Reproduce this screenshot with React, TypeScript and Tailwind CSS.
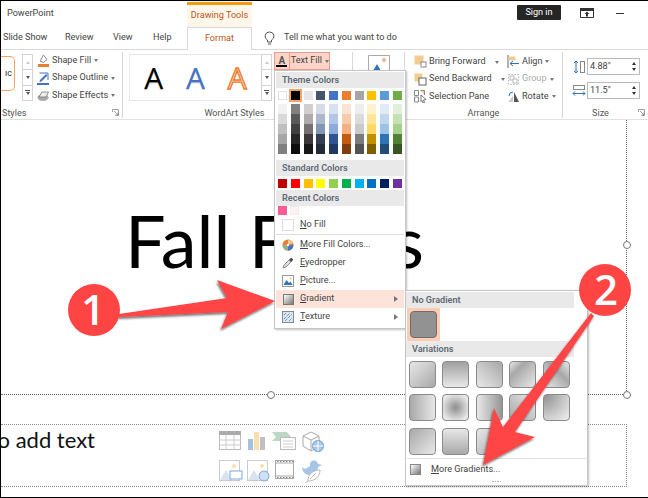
import React from "react";

const theme = ["bg-white", "bg-black", "bg-[#e7e6e6]", "bg-[#44546a]", "bg-[#4472c4]", "bg-[#ed7d31]", "bg-[#a5a5a5]", "bg-[#ffc000]", "bg-[#5b9bd5]", "bg-[#70ad47]"];
const shades = [
  ["bg-[#f2f2f2]", "bg-[#d9d9d9]", "bg-[#bfbfbf]", "bg-[#a6a6a6]", "bg-[#808080]"],
  ["bg-[#808080]", "bg-[#595959]", "bg-[#404040]", "bg-[#262626]", "bg-[#0d0d0d]"],
  ["bg-[#d0cece]", "bg-[#afabab]", "bg-[#767171]", "bg-[#3b3838]", "bg-[#181717]"],
  ["bg-[#d6dce5]", "bg-[#adb9ca]", "bg-[#8497b0]", "bg-[#333f50]", "bg-[#222a35]"],
  ["bg-[#d9e2f3]", "bg-[#b4c6e7]", "bg-[#8eaadb]", "bg-[#2f5496]", "bg-[#1f3864]"],
  ["bg-[#fbe4d5]", "bg-[#f7cbac]", "bg-[#f4b083]", "bg-[#c55a11]", "bg-[#833c0b]"],
  ["bg-[#ededed]", "bg-[#dbdbdb]", "bg-[#c9c9c9]", "bg-[#7b7b7b]", "bg-[#525252]"],
  ["bg-[#fff2cc]", "bg-[#ffe599]", "bg-[#ffd966]", "bg-[#bf9000]", "bg-[#7f6000]"],
  ["bg-[#deeaf6]", "bg-[#bdd7ee]", "bg-[#9cc3e5]", "bg-[#2e75b5]", "bg-[#1f4e79]"],
  ["bg-[#e2efd9]", "bg-[#c5e0b3]", "bg-[#a8d08d]", "bg-[#538135]", "bg-[#375623]"],
];
const standard = ["bg-[#c00000]", "bg-[#ff0000]", "bg-[#ffc000]", "bg-[#ffff00]", "bg-[#92d050]", "bg-[#00b050]", "bg-[#00b0f0]", "bg-[#0070c0]", "bg-[#002060]", "bg-[#7030a0]"];
const variations = [
  "bg-[linear-gradient(135deg,#e8e8e8,#a8a8a8)]",
  "bg-[linear-gradient(180deg,#a0a0a0,#e8e8e8)]",
  "bg-[linear-gradient(225deg,#a8a8a8,#e8e8e8)]",
  "bg-[linear-gradient(315deg,#e8e8e8,#a8a8a8_70%,#e8e8e8)]",
  "bg-[linear-gradient(45deg,#e8e8e8,#a8a8a8_60%,#e8e8e8)]",
  "bg-[linear-gradient(90deg,#a8a8a8,#e8e8e8)]",
  "bg-[radial-gradient(circle,#8e8e8e,#e8e8e8_80%)]",
  "bg-[linear-gradient(90deg,#e8e8e8,#969696)]",
  "bg-[linear-gradient(45deg,#a8a8a8,#e8e8e8)]",
  "bg-[radial-gradient(circle_at_top_left,#8e8e8e,#e8e8e8_90%)]",
  "bg-[linear-gradient(135deg,#a8a8a8,#e8e8e8)]",
  "bg-[linear-gradient(180deg,#e8e8e8,#a8a8a8)]",
  "bg-[linear-gradient(315deg,#a8a8a8,#e8e8e8)]",
];

const Caret = () => <span className="inline-block ml-[3px] border-x-[2.5px] border-t-[3px] border-x-transparent border-t-[#777]" />;

function ScrollCol() {
  return (
    <div className="flex flex-col w-[11px] h-[47px] border border-[#d4d4d4] bg-white shrink-0">
      <div className="flex-1 flex items-center justify-center border-b border-[#d4d4d4]"><span className="border-x-[2.5px] border-b-[3px] border-x-transparent border-b-[#ccc]" /></div>
      <div className="flex-1 flex items-center justify-center border-b border-[#d4d4d4]"><span className="border-x-[2.5px] border-t-[3px] border-x-transparent border-t-[#555]" /></div>
      <div className="flex-1 flex flex-col items-center justify-center gap-[1px]"><span className="w-[5px] h-px bg-[#555]" /><span className="border-x-[2.5px] border-t-[3px] border-x-transparent border-t-[#555]" /></div>
    </div>
  );
}

function Launcher() {
  return (
    <svg width="7" height="7" viewBox="0 0 7 7" className="absolute right-[3px] bottom-[2px]">
      <path d="M0.5 3V0.5H6.5V6.5H3.5M2 2L6 6M6 3.5V6H3.5" fill="none" stroke="#888" strokeWidth="0.8" />
    </svg>
  );
}

function Group({ label, className, labelClass, children, launcher }: { label: string; className: string; labelClass: string; children: React.ReactNode; launcher?: boolean }) {
  return (
    <div className={`relative flex flex-col border-r border-[#d8d8d8] h-[66px] mt-[2px] ${className}`}>
      <div className="flex-1 flex min-h-0">{children}</div>
      <div className={`h-[14px] leading-[18px] text-[#555] ${labelClass}`}>{label}</div>
      {launcher && <Launcher />}
    </div>
  );
}

function SmallBtn({ icon, children, muted }: { icon: React.ReactNode; children: React.ReactNode; muted?: boolean }) {
  return (
    <div className={`flex items-center h-[17.5px] whitespace-nowrap ${muted ? "text-[#aaa]" : "text-[#444]"}`}>
      <span className="w-[15px] h-[14px] mr-[1px] flex items-center justify-center shrink-0">{icon}</span>
      {children}
    </div>
  );
}

function Spinner() {
  return (
    <div className="flex flex-col items-center gap-[3px] mr-[3px]">
      <span className="border-x-[2.5px] border-b-[3px] border-x-transparent border-b-[#333]" />
      <span className="border-x-[2.5px] border-t-[3px] border-x-transparent border-t-[#333]" />
    </div>
  );
}

function SizeInput({ value }: { value: string }) {
  return (
    <div className="w-[53px] h-[17px] border border-[#bbb] flex items-center justify-between pl-[2px] text-[#444] bg-white">
      {value}
      <Spinner />
    </div>
  );
}

function Header({ children }: { children: React.ReactNode }) {
  return <div className="h-[16px] bg-[#e9e9e9] pl-[6px] font-semibold text-[#5f6a75] leading-[16px]">{children}</div>;
}

function Item({ icon, u, rest, arrow, active }: { icon: React.ReactNode; u: string; rest: string; arrow?: boolean; active?: boolean }) {
  return (
    <div className={`relative h-[18px] flex items-center text-[#444] ${active ? "bg-[#fde3da]" : ""}`}>
      <span className="w-[24px] flex justify-center shrink-0">{icon}</span>
      <span><span className="underline">{u}</span>{rest}</span>
      {arrow && <span className="absolute right-[6px] border-y-[3px] border-l-[4px] border-y-transparent border-l-[#777]" />}
    </div>
  );
}

function TextFillMenu() {
  return (
    <div className="absolute left-[273px] top-[69px] w-[132px] h-[259px] bg-white border border-[#c6c6c6] shadow-[1px_1px_2px_rgba(0,0,0,0.25)] p-px flex flex-col">
      <Header>Theme Colors</Header>
      <div className="grid grid-cols-10 gap-x-[3.8px] px-[2px] pt-[3px]">
        {theme.map((c, i) => (
          <span key={i} className={`h-[9px] ${c} ${i === 1 ? "outline-2 outline-[#f4a26b]" : i === 0 ? "border border-[#e2e2e2]" : ""}`} />
        ))}
      </div>
      <div className="grid grid-cols-10 gap-x-[3.8px] px-[2px] pt-[4px]">
        {shades.map((col, i) => (
          <div key={i} className="flex flex-col">
            {col.map((c) => <span key={c} className={`h-[10px] ${c}`} />)}
          </div>
        ))}
      </div>
      <div className="mt-[6px]"><Header>Standard Colors</Header></div>
      <div className="grid grid-cols-10 gap-x-[3.8px] px-[2px] pt-[3px] pb-[2px]">
        {standard.map((c) => <span key={c} className={`h-[9px] ${c}`} />)}
      </div>
      <Header>Recent Colors</Header>
      <div className="flex gap-[3px] px-[2px]">
        <span className="w-[9px] h-[9px] bg-[#fb5c95]" />
        <span className="w-[9px] h-[9px] bg-[#fdf3f6] border border-[#eee]" />
      </div>
      <div className="h-[18px] mt-px flex items-center text-[#444]">
        <span className="w-[24px] flex justify-center"><span className="w-[12px] h-[12px] border border-[#ddd]" /></span>
        <span><span className="underline">N</span>o Fill</span>
      </div>
      <div className="h-px bg-[#dcdcdc]" />
      <div className="pt-[1px]">
        <Item u="M" rest="ore Fill Colors..." icon={
          <svg width="12" height="12" viewBox="0 0 12 12"><circle cx="6" cy="6" r="5.5" fill="#ed7d31" /><path d="M6 6L11.5 6A5.5 5.5 0 0 1 6 11.5Z" fill="#4472c4" /><path d="M6 6L6 11.5A5.5 5.5 0 0 1 0.5 6Z" fill="#8fb08a" /><path d="M6 6L6 0.5A5.5 5.5 0 0 1 11 4Z" fill="#f3c98b" /><circle cx="6" cy="6" r="1.3" fill="#fff" /></svg>
        } />
        <Item u="E" rest="yedropper" icon={
          <svg width="12" height="12" viewBox="0 0 12 12"><path d="M1 11L2 8L7 3L9 5L4 10Z" fill="#ddd" stroke="#666" strokeWidth="0.7" /><path d="M7 2.5L9.5 0.8L11.2 2.5L9.5 5Z" fill="#444" /></svg>
        } />
        <Item u="P" rest="icture..." icon={
          <svg width="12" height="12" viewBox="0 0 12 12"><rect x="0.5" y="0.5" width="11" height="11" fill="#fff" stroke="#999" /><path d="M1.5 10L4.5 5L7 8L8.5 6.5L10.5 10Z" fill="#2e75b5" /><circle cx="8.5" cy="3.5" r="1" fill="#f4b183" /></svg>
        } />
        <Item active arrow u="G" rest="radient" icon={<span className="w-[11px] h-[11px] border border-[#777] bg-[linear-gradient(135deg,#fff,#777)]" />} />
        <Item arrow u="T" rest="exture" icon={
          <svg width="12" height="12" viewBox="0 0 12 12"><rect x="0.5" y="0.5" width="11" height="11" fill="#dce6f2" stroke="#888" /><path d="M2 4L4 2M2 8L8 2M3 10L10 3M7 10L10 7" stroke="#2e75b5" strokeDasharray="1 1" fill="none" /></svg>
        } />
      </div>
    </div>
  );
}

function GradientMenu() {
  return (
    <div className="absolute left-[404px] top-[289px] w-[183px] h-[196px] bg-white border border-[#c6c6c6] shadow-[1px_1px_2px_rgba(0,0,0,0.25)] pt-px flex flex-col">
      <div className="w-[168px]"><Header>No Gradient</Header></div>
      <div className="w-[33px] h-[33px] ml-px bg-[#fbcdb4] flex items-center justify-center">
        <span className="w-[27px] h-[27px] rounded-[4px] bg-[#929292] border border-[#6e6e6e]" />
      </div>
      <div className="w-[168px]"><Header>Variations</Header></div>
      <div className="grid grid-cols-[repeat(5,27px)] gap-x-[6.4px] gap-y-[6.4px] pl-[3px] pt-[4px]">
        {variations.map((c, i) => <span key={i} className={`h-[27px] rounded-[4px] border border-[#8a8a8a] ${c}`} />)}
      </div>
      <div className="h-px bg-[#e0e0e0] mx-px mt-[3px]" />
      <div className="h-[20px] flex items-center text-[#444] mt-px">
        <span className="w-[25px] pl-[4px] flex"><span className="w-[11px] h-[11px] border border-[#888] bg-[linear-gradient(135deg,#fff,#777)]" /></span>
        <span><span className="underline">M</span>ore Gradients...</span>
      </div>
      <div className="flex justify-center gap-[1px] pt-[1px]">
        {[0, 1, 2, 3].map((i) => <span key={i} className="w-[1.5px] h-[1.5px] bg-[#bbb]" />)}
      </div>
    </div>
  );
}

function Annotations() {
  return (
    <svg width="648" height="498" viewBox="0 0 648 498" className="absolute left-0 top-0 pointer-events-none">
      <defs>
        <filter id="ds" x="-20%" y="-20%" width="140%" height="140%">
          <feDropShadow dx="-1" dy="2" stdDeviation="1" floodColor="#000" floodOpacity="0.55" />
        </filter>
      </defs>
      <g fill="#ff4444" filter="url(#ds)">
        <path d="M118 313L226 297L216 279L274 300L220 328L227 311L118 316Z" />
        <path d="M590 312L593 315L514 431L534 436L482 464L493 407L502 426Z" />
      </g>
      <circle cx="93" cy="309" r="26" fill="#ff4444" />
      <text x="92" y="324" textAnchor="middle" fontSize="42" fontWeight="600" fill="#fff" fontFamily="'Open Sans',sans-serif">1</text>
      <circle cx="604" cy="289" r="26" fill="#ff4444" />
      <text x="605" y="304" textAnchor="middle" fontSize="42" fontWeight="600" fill="#fff" fontFamily="'Open Sans',sans-serif">2</text>
    </svg>
  );
}

function Handle({ className }: { className: string }) {
  return <span className={`absolute w-[8px] h-[8px] rounded-full bg-white border border-[#777] ${className}`} />;
}

export default function App() {
  return (
    <div className="relative w-[648px] h-[498px] overflow-hidden bg-white border-t border-l border-b border-black flex flex-col text-[9.1px] font-['Roboto','Open_Sans',sans-serif]">
      {/* title row */}
      <div className="h-[26px] flex items-start shrink-0 text-[#444]">
        <div className="w-[186px] pl-[6px] pt-[5px] leading-[14px]">PowerPoint</div>
        <div className="w-[65px] h-[25px] mt-px bg-[#fdf6ea] border-t-[3px] border-[#f39c12] text-center text-[#c0561a] leading-[20px]">Drawing Tools</div>
        <div className="ml-[265px] mt-[4px] w-[44px] h-[15px] bg-[#262626] text-white text-center leading-[15px] rounded-[1px]">Sign in</div>
        <svg width="14" height="10" viewBox="0 0 14 10" className="ml-[19px] mt-[7px]"><path d="M0.5 0.5H13.5V9.5H0.5Z" fill="none" stroke="#333" /><path d="M0 0H14V3H0Z" fill="#333" /><path d="M7 3.5L9.5 6H8V8.5H6V6H4.5Z" fill="#333" /></svg>
        <div className="ml-[22px] mt-[12px] w-[8px] h-px bg-[#333]" />
      </div>
      {/* tabs */}
      <div className="h-[23px] flex items-stretch shrink-0 border-b border-[#d9d9d9] text-[#444]">
        <div className="w-[64px] pl-[2px] leading-[21px]">Slide Show</div>
        <div className="w-[48px] leading-[21px]">Review</div>
        <div className="w-[40px] leading-[21px]">View</div>
        <div className="w-[34px] leading-[21px]">Help</div>
        <div className="w-[65px] h-[23px] bg-white border-x border-t border-[#d9d9d9] text-center text-[#c0561a] leading-[20px]">Format</div>
        <svg width="11" height="15" viewBox="0 0 11 15" className="ml-[12px] mt-[4px]"><path d="M5.5 1A4.2 4.2 0 0 0 3.5 9V11H7.5V9A4.2 4.2 0 0 0 5.5 1ZM4 13H7" fill="none" stroke="#555" /></svg>
        <div className="ml-[9px] leading-[21px]">Tell me what you want to do</div>
      </div>
      {/* ribbon */}
      <div className="h-[70px] flex shrink-0 border-b border-[#e0e0e0] text-[#444] bg-white">
        <Group label="Styles" labelClass="pl-px" launcher className="w-[122px]">
          <div className="flex w-full">
            <div className="w-[14px] h-[35px] mt-[4px] border border-l-0 border-[#f4a460] rounded-r-[5px] text-[9px] leading-[33px] text-right pr-[2px] text-[#333] shrink-0">ıc</div>
            <div className="ml-[7px] mt-[2px]"><ScrollCol /></div>
            <div className="ml-[3px]">
              <SmallBtn icon={<svg width="13" height="13" viewBox="0 0 13 13"><path d="M3 7L6.5 1L10 5.5L6.5 8.5Z" fill="#fff" stroke="#888" /><rect x="1" y="10" width="11" height="3" fill="#ed7d31" /></svg>}>Shape Fill<Caret /></SmallBtn>
              <SmallBtn icon={<svg width="13" height="13" viewBox="0 0 13 13"><path d="M2.5 1H11V8" fill="none" stroke="#4472c4" /><path d="M3 8L9 2L10.5 3.5L4.5 9.5L2.5 10Z" fill="#4472c4" /><rect x="0" y="11" width="12" height="2" fill="#4472c4" /></svg>}>Shape Outline<Caret /></SmallBtn>
              <SmallBtn icon={<svg width="13" height="12" viewBox="0 0 13 12"><ellipse cx="6" cy="7.5" rx="5.5" ry="3.5" fill="#aaa" /><path d="M2 7L5 2H11.5L9 7Z" fill="#eee" stroke="#777" strokeWidth="0.8" /></svg>}>Shape Effects<Caret /></SmallBtn>
            </div>
          </div>
        </Group>
        <Group label="WordArt Styles" labelClass="text-center pr-[12px]" className="w-[230px] pl-[6px]">
          <div className="flex w-full">
            <div className="w-[132px] h-[47px] mt-[2px] border-y border-l border-[#e6e6e6] flex items-center justify-around px-[3px] text-[30px] font-medium font-['Open_Sans',sans-serif] leading-none shrink-0">
              <span className="text-black [text-shadow:0_1px_1px_rgba(0,0,0,0.3)]">A</span>
              <span className="text-[#4472c4] [text-shadow:0_1px_1px_rgba(0,0,0,0.2)]">A</span>
              <span className="text-[#fbd5bd] [-webkit-text-stroke:1.3px_#ed7d31]">A</span>
            </div>
            <div className="mt-[2px]"><ScrollCol /></div>
          </div>
        </Group>
        <Group label="" labelClass="" className="w-[52px]">
          <div className="w-full flex justify-center pt-[3px] overflow-hidden">
            <svg width="22" height="16" viewBox="0 0 22 16"><path d="M0.5 16V0.5H21.5V16" fill="#fff" stroke="#aaa" /><circle cx="16" cy="5" r="2" fill="#f4b183" /><path d="M5 16L9 9L13 16Z" fill="#2e75b5" /></svg>
          </div>
        </Group>
        <Group label="Arrange" labelClass="text-center" className="w-[158px]">
          <div className="flex pl-[8px] pt-[1px] w-full">
            <div className="w-[93px] shrink-0">
              <SmallBtn icon={<svg width="13" height="13" viewBox="0 0 13 13"><rect x="0.5" y="0.5" width="9" height="9" fill="#f2cd92" /><rect x="7" y="7" width="5" height="5" fill="#fff" stroke="#888" /></svg>}>Bring Forward<span className="ml-[6px]"><Caret /></span></SmallBtn>
              <SmallBtn icon={<svg width="13" height="13" viewBox="0 0 13 13"><rect x="0.5" y="0.5" width="8" height="8" fill="#f2cd92" /><rect x="5" y="5" width="7" height="7" fill="#fff" stroke="#666" /></svg>}>Send Backward<span className="ml-[6px]"><Caret /></span></SmallBtn>
              <SmallBtn icon={<svg width="13" height="13" viewBox="0 0 13 13"><path d="M0.5 0.5H4.5V5.5H0.5ZM0.5 7H4.5V12H0.5Z" fill="#fff" stroke="#888" /><path d="M6.5 0.5H10.5V5" fill="#f2cd92" stroke="#888" /><path d="M7 5L12 9.5L9.5 10L10.5 12.5L9 13L8 10.5L7 11.5Z" fill="#fff" stroke="#444" strokeWidth="0.7" /></svg>}>Selection Pane</SmallBtn>
            </div>
            <div>
              <SmallBtn icon={<svg width="13" height="13" viewBox="0 0 13 13"><path d="M1 0V13" stroke="#666" /><rect x="1.5" y="1.5" width="7" height="4" fill="#f2cd92" /><path d="M12 8.5H3M6 6L3 8.5L6 11" fill="none" stroke="#2e75b5" /></svg>}>Align<Caret /></SmallBtn>
              <SmallBtn muted icon={<svg width="13" height="13" viewBox="0 0 13 13"><path d="M1.5 1.5H11.5V11.5H1.5Z" fill="none" stroke="#bbb" strokeDasharray="1.5 1.5" /><rect x="3" y="3" width="4" height="4" fill="#fff" stroke="#bbb" /><rect x="6" y="6" width="4" height="4" fill="#fff" stroke="#bbb" /></svg>}>Group<Caret /></SmallBtn>
              <SmallBtn icon={<svg width="13" height="13" viewBox="0 0 13 13"><path d="M7 2L7 12H12Z" fill="#555" /><path d="M1 12L6 6V12Z" fill="#ccc" /><path d="M2 6A4 4 0 0 1 6 2" fill="none" stroke="#2e75b5" /></svg>}>Rotate<Caret /></SmallBtn>
            </div>
          </div>
        </Group>
        <Group label="Size" labelClass="text-center pr-[10px]" launcher className="flex-1 border-r-0">
          <div className="flex flex-col gap-[7px] pl-[9px] pt-[6px]">
            <div className="flex items-center gap-[1px]">
              <svg width="14" height="14" viewBox="0 0 14 14"><path d="M4 1V13M2 3L4 1L6 3M2 11L4 13L6 11" fill="none" stroke="#2e75b5" /><rect x="8.5" y="1.5" width="4" height="11" fill="#fff" stroke="#888" /></svg>
              <SizeInput value='4.88"' />
            </div>
            <div className="flex items-center gap-[1px]">
              <svg width="14" height="14" viewBox="0 0 14 14"><rect x="1.5" y="1.5" width="11" height="4" fill="#fff" stroke="#888" /><path d="M1 9.5H13M3 7.5L1 9.5L3 11.5M11 7.5L13 9.5L11 11.5" fill="none" stroke="#2e75b5" /></svg>
              <SizeInput value='11.5"' />
            </div>
          </div>
        </Group>
      </div>
      {/* slide */}
      <div className="flex-1 flex flex-col">
        <div className="relative h-[275px] mr-[21px] border-b border-r border-dotted border-[#666] flex justify-center pt-[75px] pr-[78px]">
          <div className="text-[72px] leading-[90px] text-black whitespace-nowrap font-['Lato',sans-serif]">Fall Fonts</div>
          <Handle className="right-[-5px] top-[121px]" />
          <Handle className="left-[266px] bottom-[-5px]" />
          <Handle className="right-[-5px] bottom-[-5px]" />
        </div>
        <div className="h-[63px] mt-[29px] mr-[21px] border-y border-r border-dotted border-[#888] flex">
          <div className="w-[94px] shrink-0 pt-[1px] text-[22px] leading-[28px] text-[#111] whitespace-nowrap overflow-hidden flex justify-end font-['Lato',sans-serif]">o add text</div>
          <div className="ml-[124px] mt-[6px] grid grid-cols-[repeat(4,28px)] gap-y-[3px] gap-x-0">
            <svg width="23" height="20" viewBox="0 0 23 20"><rect x="0.5" y="0.5" width="21" height="18" fill="#fff" stroke="#bbb" /><rect x="0" y="0" width="22" height="4" fill="#aaa" /><path d="M0 9H22M0 14H22M7 4V19M15 4V19" stroke="#ccc" /></svg>
            <svg width="20" height="20" viewBox="0 0 20 20"><rect x="1" y="8" width="5" height="11" fill="#a4c2e0" /><rect x="7" y="1" width="5" height="18" fill="#f9dfae" /><rect x="13" y="6" width="5" height="13" fill="#bfbfbf" /></svg>
            <svg width="24" height="20" viewBox="0 0 24 20" className="ml-[-3px]"><path d="M0 1H15L19 6L15 10H0L4 6Z" fill="#bcd8c4" /><rect x="8.5" y="6.5" width="15" height="12" fill="#fff" stroke="#bbb" /><path d="M11 10H21M11 13H21M11 16H21" stroke="#ccc" /></svg>
            <svg width="24" height="22" viewBox="0 0 24 22" className="ml-[-2px]"><path d="M2 5L10 1L18 5V15L10 20L2 15ZM2 5L10 9L18 5M10 9V20" fill="#fff" stroke="#aaa" /><circle cx="17" cy="15" r="5.5" fill="#a9c9e8" stroke="#5b9bd5" /><path d="M11.5 15H22.5M17 9.5V20.5" stroke="#fff" /></svg>
            <svg width="24" height="22" viewBox="0 0 24 22"><rect x="0.5" y="0.5" width="20" height="20" fill="#fff" stroke="#ccc" /><circle cx="15" cy="6" r="2" fill="#f9dfae" /><path d="M1 20L7 10L13 20Z" fill="#d9e4f1" /><rect x="11" y="11" width="12" height="8" fill="#fff" stroke="#7aa7d8" /></svg>
            <svg width="24" height="22" viewBox="0 0 24 22"><rect x="0.5" y="0.5" width="20" height="20" fill="#fff" stroke="#ccc" /><circle cx="15" cy="6" r="2" fill="#f9dfae" /><path d="M1 20L7 10L13 20Z" fill="#d9e4f1" /><circle cx="17" cy="16" r="5" fill="#cfe0f2" stroke="#7aa7d8" /></svg>
            <svg width="20" height="20" viewBox="0 0 20 20"><rect x="0.5" y="0.5" width="18" height="18" fill="#fff" stroke="#aaa" /><path d="M0 3H19M0 16H19" stroke="#aaa" /><path d="M2 1.5H18M2 17.5H18" stroke="#888" strokeDasharray="1.5 1.5" /></svg>
            <svg width="22" height="23" viewBox="0 0 22 23" className="ml-[-2px]"><path d="M1 7C4 11 7 7 9 6C8 1 13 -1 16 2C17 3 17 4 17 4L21 5L17 7C17 12 13 15 8 15C4 15 1 11 1 7Z" fill="#a4c5e6" /><path d="M7 21C7 14 12 10 19 10C19 17 14 21 7 21ZM7 21L4 23M9 19L15 13" fill="#fff" stroke="#bbb" /></svg>
          </div>
        </div>
      </div>
      <TextFillMenu />
      {/* text fill button */}
      <div className="absolute left-[273px] top-[51px] w-[56px] h-[18px] bg-[#fcd5c8] border border-[#ef9a8d] flex items-center whitespace-nowrap text-[#444]">
        <span className="w-[16px] h-full border-r border-[#ef9a8d] flex flex-col items-center justify-center">
          <span className="text-[10px] leading-[9px] font-bold text-[#555]">A</span>
          <span className="w-[11px] h-[2px] bg-black" />
        </span>
        <span className="pl-px">Text Fill</span><Caret />
      </div>
      <GradientMenu />
      <Annotations />
    </div>
  );
}
